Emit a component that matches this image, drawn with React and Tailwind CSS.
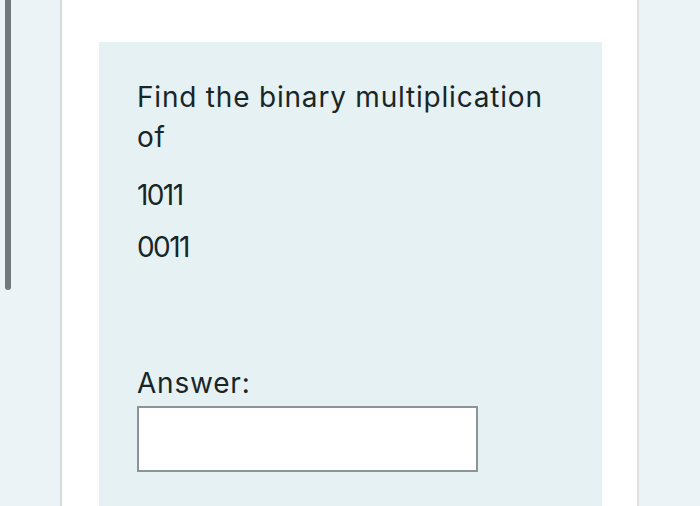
export default function App() {
  return (
    <div
      className="flex h-[506px] w-[700px] overflow-hidden bg-[#ecf3f6] text-[#182628]"
      style={{ fontFamily: "Inter, 'Noto Sans', sans-serif" }}
    >
      <div className="flex w-[60px] shrink-0 pl-[5px]">
        <div className="h-[290px] w-[6px] rounded-b-full bg-[#72777b]" />
      </div>
      <div className="flex w-[579px] shrink-0 flex-col border-x-2 border-l-[#d6dadc] border-r-[#dde1e3] bg-white pl-[37px] pr-[35px] pt-[42px]">
        <div className="flex-1 bg-[#e6f1f4] pl-[38px] pt-[35px] text-[28px] leading-[40px] tracking-[0.8px]">
          <div className="w-[440px]">Find the binary multiplication of</div>
          <div className="mt-[18px] tracking-[-1.6px]">1011</div>
          <div className="mt-[12px] tracking-[-1.6px]">0011</div>
          <div className="mt-[96px]">Answer:</div>
          <div className="mt-[3px] h-[66px] w-[341px] border-2 border-[#8c9498] bg-white" />
        </div>
      </div>
      <div className="flex-1" />
    </div>
  );
}
